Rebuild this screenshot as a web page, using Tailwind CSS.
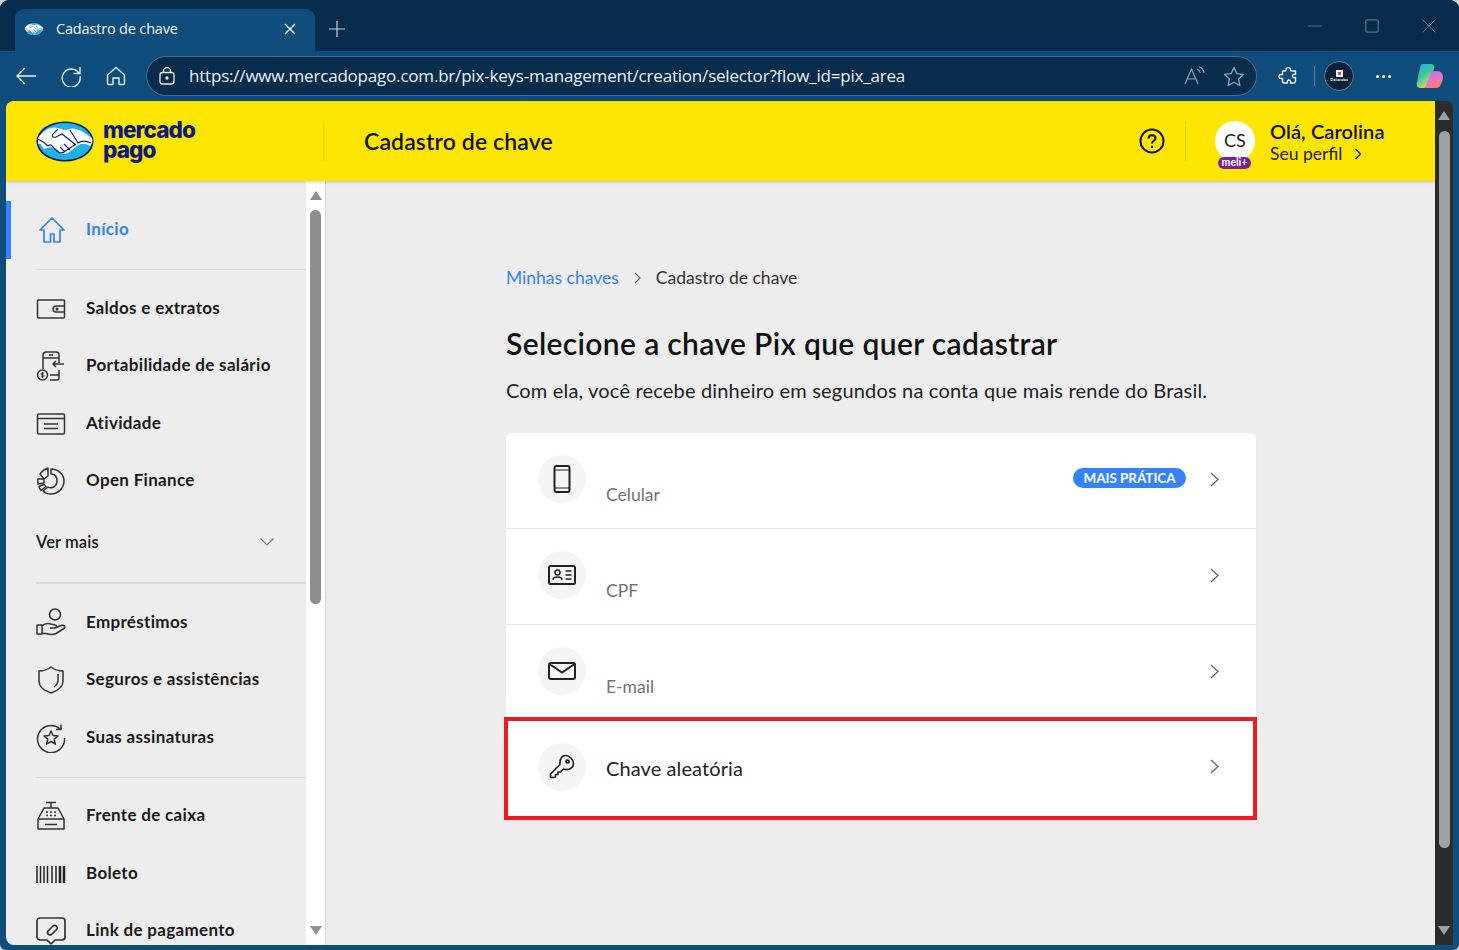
<!DOCTYPE html>
<html lang="pt-BR">
<head>
<meta charset="utf-8">
<title>Cadastro de chave</title>
<script src="https://cdn.jsdelivr.net/npm/@tailwindcss/browser@4"></script>
</head>
<body class="bg-[#cfd3d6] overflow-hidden">
<svg width="0" height="0" class="absolute">
  <defs>
    <symbol id="mp" viewBox="0 0 58 41">
      <ellipse cx="29" cy="20.5" rx="28.5" ry="20" fill="#0b1a80"/>
      <ellipse cx="29" cy="20.5" rx="26.8" ry="18.4" fill="#1fb2e8"/>
      <path d="M2 17C8 9 15 5 22 7c4 1 7 3 11 1 6-2 13 2 23 9 1 3 0 6-2 8-5-3-9-3-13 0l-9 7c-4 2-8 1-11-3-3-4-8-3-13-1-3-3-3-7-6-5z" fill="#fff"/>
      <path d="M22 8l-5 5c-2 2 0 4 3 3l6-3 14 11M12 25c2-2 4-1 5 1l4 4c2 2 5 2 7 1l12-8M24 26l5 5M28 23l6 6M34 9l8 13c3-2 7-3 13 0M2 18c4 2 7 4 10 7" fill="none" stroke="#0b1a80" stroke-width="1.100"/>
    </symbol>
    <linearGradient id="cp1" x1="0" y1="0" x2="0.6" y2="1"><stop offset="0" stop-color="#2aa5ee"/><stop offset=".5" stop-color="#34c9a0"/><stop offset="1" stop-color="#f4d94e"/></linearGradient>
    <linearGradient id="cp2" x1="0.2" y1="0" x2="0.6" y2="1"><stop offset="0" stop-color="#a877ee"/><stop offset=".55" stop-color="#ec72c8"/><stop offset="1" stop-color="#f9854a"/></linearGradient>
  </defs>
</svg>

<div class="w-[1459px] h-[950px] bg-[#0e4c7b] rounded-t-[9px] rounded-b-[6px] overflow-hidden flex flex-col font-['Lato',sans-serif]">
  <!-- tab strip -->
  <div class="h-[51px] shrink-0 bg-[#072b4a] flex items-end pl-[15px]">
    <div class="w-[300px] h-[42px] bg-[#0e4c7b] rounded-t-[9px] flex items-center pl-[9px] pr-[19px] pb-[2px] text-white">
      <svg class="w-[20px] h-[14px] mr-[12px]"><use href="#mp"/></svg>
      <span class="flex-1 text-[14.5px] font-['Open_Sans',sans-serif] tracking-[-0.17px] text-[#f2f6f9]">Cadastro de chave</span>
      <svg class="w-[12px] h-[12px]" viewBox="0 0 12 12" fill="none" stroke="#fff" stroke-width="1.3"><path d="M1 1l10 10M11 1L1 11"/></svg>
    </div>
    <div class="w-[43px] h-[42px] flex items-center justify-center pb-[2px]">
      <svg class="w-[18px] h-[18px]" viewBox="0 0 18 18" fill="none" stroke="#c6d0d8" stroke-width="1.2"><path d="M9 1v16M1 9h16"/></svg>
    </div>
    <div class="flex-1"></div>
    <div class="h-[51px] flex items-center gap-[43px] pr-[23px]">
      <svg class="w-[14px] h-[14px]" viewBox="0 0 14 14" stroke="#5b7287" stroke-width="1"><path d="M0 7h14"/></svg>
      <svg class="w-[14px] h-[14px]" viewBox="0 0 14 14" fill="none" stroke="#5b7287" stroke-width="1.2"><rect x=".8" y=".8" width="12.4" height="12.4" rx="1.5"/></svg>
      <svg class="w-[14px] h-[14px]" viewBox="0 0 14 14" fill="none" stroke="#5b7287" stroke-width="1"><path d="M.5.5l13 13M13.500.5l-13 13"/></svg>
    </div>
  </div>

  <!-- toolbar -->
  <div class="h-[50px] shrink-0 flex items-center pl-[15px] text-white">
    <svg class="w-[22px] h-[20px] mr-[23px]" viewBox="0 0 22 20" fill="none" stroke="#e8eef3" stroke-width="1.4"><path d="M21 10H2M10 2l-8 8 8 8"/></svg>
    <svg class="w-[22px] h-[22px] mr-[24px]" viewBox="0 0 22 22" fill="none" stroke="#e8eef3" stroke-width="1.4"><path d="M19 8.500A9 9 0 1 0 20 11M20 2v6.500h-6.500"/></svg>
    <svg class="w-[20px] h-[20px] mr-[20px]" viewBox="0 0 20 20" fill="none" stroke="#e8eef3" stroke-width="1.4" stroke-linejoin="round"><path d="M10 1.500L1.500 9v8.500a1 1 0 0 0 1 1h4.500v-6.500h6v6.500h4.500a1 1 0 0 0 1-1V9z"/></svg>
    <div class="w-[1111px] h-[40px] bg-[#082c4c] border border-[#46708f] rounded-full flex items-center pl-[12px] pr-[11px]">
      <svg class="w-[16px] h-[18px] mr-[14px]" viewBox="0 0 16 18" fill="none" stroke="#e8eef3" stroke-width="1.3"><rect x="1" y="5.500" width="14" height="11.500" rx="2.500"/><path d="M4.500 5.500V4a3.500 3.500 0 0 1 7 0v1.500"/><circle cx="8" cy="11" r="1" fill="#e8eef3"/></svg>
      <span class="flex-1 text-[17px] tracking-[-0.2px] text-[#eef3f7] font-['Open_Sans',sans-serif] whitespace-nowrap">https://www.mercadopago.com.br/pix-keys-management/creation/selector?flow_id=pix_area</span>
      <svg class="w-[21px] h-[20px] mr-[18px]" viewBox="0 0 21 20" fill="none" stroke="#8ba3b6" stroke-width="1.2"><path d="M1 18L7.500 3 14 18M3.200 13h8.600M13 3c2 1 3 2 3.300 4M15 .8c3 1 4.600 3.200 5 6"/></svg>
      <svg class="w-[22px] h-[21px]" viewBox="0 0 22 21" fill="none" stroke="#8ba3b6" stroke-width="1.3" stroke-linejoin="round"><path d="M11 1.500l2.900 6.100 6.600.8-4.900 4.500 1.300 6.600-5.900-3.300-5.900 3.300 1.300-6.600L1.500 8.400l6.600-.8z"/></svg>
    </div>
    <svg class="w-[20px] h-[20px] ml-[21px]" viewBox="0 0 20 20" fill="none" stroke="#f2f6f9" stroke-width="1.4" stroke-linejoin="round"><path d="M8 3.500C8 1 12.500 1 12.500 3.500c0 1 .5 1.500 1.500 1.500h3.500v3.500c-2.500-.5-3 .5-3 1.500s.5 2 3 1.500v3.500c0 1-.5 2-2 2h-3c.5-2.500-.5-3-1.500-3s-2 .5-1.500 3H6c-1 0-1.500-1-1.500-2v-2.500C2 12.800 1 12 1 10.500s1-2.300 3.500-2V5H7c.7 0 1-.5 1-1.500z"/></svg>
    <div class="w-px h-[20px] bg-[#5f8098] ml-[16px]"></div>
    <div class="w-[30px] h-[30px] ml-[9px] rounded-full bg-[#0b2238] border border-[#5f7a90] flex flex-col items-center justify-center">
      <div class="w-[7px] h-[7px] bg-white flex items-center justify-center"><div class="w-[3px] h-[3px] bg-[#e0591e]"></div></div>
      <span class="text-[4px] leading-[5px] font-bold text-white">Datacaixa</span>
    </div>
    <div class="flex gap-[3px] ml-[22px]">
      <div class="w-[3px] h-[3px] rounded-full bg-white"></div><div class="w-[3px] h-[3px] rounded-full bg-white"></div><div class="w-[3px] h-[3px] rounded-full bg-white"></div>
    </div>
    <svg class="w-[28px] h-[26px] ml-[25px]" viewBox="0 0 28 26">
      <path d="M7 1h8c2 0 3 1 3.500 3L13 20c-1 3-3 5-6 5H4c-3 0-4-3-3-6L4 5c.5-2 1.500-4 3-4z" fill="url(#cp1)"/>
      <path d="M14 8h7c4 0 6 3 6 6 0 2-1 5-2 7-1 3-3 4-5 4h-9c-2 0-2-1-1-3l5-12c0-1 0-2-1-2z" fill="url(#cp2)"/>
    </svg>
  </div>

  <!-- page -->
  <div class="h-[844px] shrink-0 flex pl-[6px]">
    <div class="w-[1429px] h-full rounded-l-[8px] overflow-hidden flex flex-col bg-[#ededed]">
      <!-- header -->
      <header class="h-[80px] shrink-0 bg-[#ffe600] shadow-[0_1px_3px_rgba(0,0,0,0.2)] z-10 flex items-center pl-[30px]">
        <svg class="w-[58px] h-[41px] mr-[9px]"><use href="#mp"/></svg>
        <div class="w-[220px] pb-[3px] text-[#0b1a80] font-['Inter',sans-serif] font-extrabold text-[22.5px] leading-[20px] tracking-[-0.9px]">mercado<br>pago</div>
        <div class="w-px h-[40px] bg-[#e6cf00]"></div>
        <h2 class="ml-[40px] flex-1 text-[23px] font-semibold tracking-[0.12px] text-[#111]">Cadastro de chave</h2>
        <svg class="w-[26px] h-[26px]" viewBox="0 0 26 26" fill="none" stroke="#111" stroke-width="2"><circle cx="13" cy="13" r="11.500"/><path d="M9.500 10.500c0-2 1.500-3.300 3.500-3.300s3.500 1.300 3.500 3c0 2.700-3.500 2.500-3.500 5.300"/><circle cx="13" cy="19" r=".6" fill="#111" stroke-width="1.200"/></svg>
        <div class="w-px h-[40px] bg-[#e6cf00] ml-[20px]"></div>
        <div class="relative w-[40px] h-[40px] ml-[29px] rounded-full bg-white flex items-center justify-center text-[18px] text-[#222] pb-[1px]">CS
          <span class="absolute -bottom-[8px] left-[3px] w-[33px] h-[12px] rounded-full bg-[#7b1fa2] text-white text-[10.5px] leading-[11px] font-bold text-center">meli+</span>
        </div>
        <div class="ml-[15px] w-[165px] pt-[1px]">
          <div class="text-[20px] leading-[24px] font-semibold text-[#111] tracking-[0.1px]">Olá, Carolina</div>
          <div class="flex items-center text-[17.5px] leading-[22px] text-[#222]">Seu perfil
            <svg class="w-[8px] h-[12px] ml-[11px]" viewBox="0 0 8 12" fill="none" stroke="#222" stroke-width="1.300"><path d="M1.500 1l5 5-5 5"/></svg>
          </div>
        </div>
      </header>

      <div class="flex-1 flex min-h-0">
        <!-- sidebar -->
        <aside class="w-[300px] shrink-0 pt-[20px] overflow-hidden text-[17px] font-bold tracking-[0.32px] text-[#1a1a1a]">
          <a class="h-[58px] flex items-center pl-[27px] border-l-[5px] border-[#3483fa] text-[#3483fa]">
            <svg class="w-[28px] h-[28px] mr-[20px]" viewBox="0 0 28 28" fill="none" stroke="#3483fa" stroke-width="1.700" stroke-linejoin="round"><path d="M14 2L2 14h4v12h6.500v-8h3.500v8H22V14h4z"/></svg>
            <span class="pb-[2px]">Início</span>
          </a>
          <div class="h-px bg-[#d9d9d9] ml-[30px] mt-[10px] mb-[10px]"></div>

          <a class="h-[57.5px] flex items-center pl-[30px]">
            <svg class="w-[30px] h-[30px] mr-[20px]" viewBox="0 0 30 30" fill="none" stroke="#333" stroke-width="1.500"><rect x="1.500" y="6" width="27" height="18" rx="1"/><path d="M28 12h-8a3 3 0 0 0 0 6h8"/><circle cx="21" cy="15" r=".8" fill="#333"/></svg>
            <span class="pb-[2px]">Saldos e extratos</span>
          </a>
          <a class="h-[57.5px] flex items-center pl-[30px]">
            <svg class="w-[30px] h-[30px] mr-[20px]" viewBox="0 0 30 30" fill="none" stroke="#333" stroke-width="1.500"><path d="M7 18V4a3 3 0 0 1 3-3h10a3 3 0 0 1 3 3v8M7 7h16M13 4h4M28 13H17M20 10l-3 3 3 3M23 19v8a2 2 0 0 1-2 2h-7M14 24h9"/><circle cx="6.500" cy="24" r="5"/><path d="M8 22H6a1 1 0 0 0 0 2h1a1 1 0 0 1 0 2H5M6.500 21v6" stroke-width="1"/></svg>
            <span class="pb-[3px]">Portabilidade de salário</span>
          </a>
          <a class="h-[57.5px] flex items-center pl-[30px]">
            <svg class="w-[30px] h-[30px] mr-[20px]" viewBox="0 0 30 30" fill="none" stroke="#333" stroke-width="1.500"><rect x="1.500" y="5" width="27" height="20" rx="1.500"/><path d="M1.500 9.500h27M8 15h14M8 19.500h14"/></svg>
            <span class="pb-[2px]">Atividade</span>
          </a>
          <a class="h-[57.5px] flex items-center pl-[30px]">
            <svg class="w-[30px] h-[30px] mr-[20px]" viewBox="0 0 30 30" fill="none" stroke="#333" stroke-width="1.500" stroke-linejoin="round"><path d="M15 3c7 0 13 5 13 12s-6 13-13 13c-3 0-6-1-8-3l5-4c3 2 9 0 9-6s-3-7-6-7z"/><path d="M12 2v8L8 13 4 8c2-3 5-5 8-6zM2 13h6v4l-6 1c-.5-2-.5-3 0-5zM3 20.500l5-2 2 2-5 4c-1-1-1.500-2.500-2-4z"/></svg>
            <span class="pb-[3px]">Open Finance</span>
          </a>

          <div class="h-[40px] mt-[12px] flex items-center pl-[30px] pr-[32px] justify-between text-[16.500px] font-semibold tracking-[0.1px]">
            Ver mais
            <svg class="w-[14px] h-[8px]" viewBox="0 0 14 8" fill="none" stroke="#777" stroke-width="1.100"><path d="M.5.5L7 7l6.500-6.500"/></svg>
          </div>
          <div class="h-[2px] bg-[#d9d9d9] ml-[30px] mt-[20px] mb-[10px]"></div>

          <a class="h-[57.5px] flex items-center pl-[30px]">
            <svg class="w-[30px] h-[30px] mr-[20px]" viewBox="0 0 30 30" fill="none" stroke="#333" stroke-width="1.500" stroke-linejoin="round"><circle cx="19" cy="6.500" r="5.500"/><path d="M1 17h5v9H1zM6 18c3-3 6-3 9-2l4 1c2 .5 2 3 0 3h-5M19 20l6-2.500c3-1 5 1 3 3l-8 5c-4 2-7 1-10 0H6"/></svg>
            <span class="pb-[2px]">Empréstimos</span>
          </a>
          <a class="h-[57.5px] flex items-center pl-[30px]">
            <svg class="w-[30px] h-[30px] mr-[20px]" viewBox="0 0 30 30" fill="none" stroke="#333" stroke-width="1.500" stroke-linejoin="round"><path d="M15 2c4 3 8 4 12 4v10c0 6-6 10-12 12C9 26 3 22 3 16V6c4 0 8-1 12-4z"/><path d="M22 9v6c0 3-1 5-4 7"/></svg>
            <span class="pb-[3px]">Seguros e assistências</span>
          </a>
          <a class="h-[57.5px] flex items-center pl-[30px]">
            <svg class="w-[30px] h-[30px] mr-[20px]" viewBox="0 0 30 30" fill="none" stroke="#333" stroke-width="1.500" stroke-linejoin="round"><path d="M24 6A13.500 13.500 0 1 0 28.500 15"/><path d="M25 1.500V6.500h-5M15 8l2 4.500 5 .5-3.800 3.200 1.200 5-4.400-2.700-4.400 2.700 1.200-5L8 13l5-.5z"/></svg>
            <span class="pb-[2px]">Suas assinaturas</span>
          </a>
          <div class="h-px bg-[#d9d9d9] ml-[30px] mt-[10px] mb-[10px]"></div>
          <a class="h-[57.5px] flex items-center pl-[30px]">
            <svg class="w-[30px] h-[30px] mr-[20px]" viewBox="0 0 30 30" fill="none" stroke="#333" stroke-width="1.500" stroke-linejoin="round"><path d="M10 1.500h10M15 1.500V7M8 7h14l6 11v10H2V18zM2 18h26M9 23.500h12"/><path d="M10 11h2M14 11h2M18 11h2M10 14.500h2M14 14.500h2M18 14.500h2"/></svg>
            <span class="pb-[3px]">Frente de caixa</span>
          </a>
          <a class="h-[57.5px] flex items-center pl-[30px]">
            <svg class="w-[30px] h-[30px] mr-[20px]" viewBox="0 0 30 30" stroke="#222" fill="none"><path stroke-width="1.500" d="M1 7v17M4.500 7v17M8 7v17M11.500 7v17M16 7v17M20 7v17"/><path stroke-width="2.500" d="M24 7v17M28 7v17"/></svg>
            <span class="pb-[2px]">Boleto</span>
          </a>
          <a class="h-[57.5px] flex items-center pl-[30px]">
            <svg class="w-[30px] h-[30px] mr-[20px]" viewBox="0 0 30 30" fill="none" stroke="#333" stroke-width="1.700" stroke-linejoin="round"><path d="M4 2h22a3 3 0 0 1 3 3v16a3 3 0 0 1-3 3h-7l-4 4-4-4H4a3 3 0 0 1-3-3V5a3 3 0 0 1 3-3z"/><path d="M13 14l4-4a2.500 2.500 0 0 1 3.500 3.500l-5 5a2.500 2.500 0 0 1-3.500-3.500l3-3"/></svg>
            <span class="pb-[3px]">Link de pagamento</span>
          </a>
        </aside>
        <!-- sidebar scrollbar -->
        <div class="w-[20px] shrink-0 bg-white border-r border-[#d8d8d8] flex flex-col items-center pt-[10px] pb-[10px]">
          <div class="w-0 h-0 border-x-[6px] border-x-transparent border-b-[9px] border-b-[#8e8e8e]"></div>
          <div class="w-[11px] h-[394px] rounded-full bg-[#8e8e8e] mt-[10px]"></div>
          <div class="flex-1"></div>
          <div class="w-0 h-0 border-x-[6px] border-x-transparent border-t-[9px] border-t-[#8e8e8e]"></div>
        </div>

        <!-- main -->
        <main class="flex-1 pl-[180px] pt-[86px] text-[#1a1a1a]">
          <nav class="flex items-center text-[17.5px] leading-[22px]">
            <span class="text-[#3483fa]">Minhas chaves</span>
            <svg class="w-[7px] h-[12px] mx-[15px]" viewBox="0 0 7 12" fill="none" stroke="#666" stroke-width="1.200"><path d="M1 1l5 5-5 5"/></svg>
            <span class="text-[#333]">Cadastro de chave</span>
          </nav>
          <h1 class="mt-[35px] text-[30px] leading-[38px] font-semibold tracking-[0.35px] text-[#111]">Selecione a chave Pix que quer cadastrar</h1>
          <p class="mt-[15px] text-[20px] leading-[26px] tracking-[0.18px] text-[#222]">Com ela, você recebe dinheiro em segundos na conta que mais rende do Brasil.</p>

          <section class="w-[750px] mt-[30px] bg-white rounded-[6px] shadow-[0_1px_2px_rgba(0,0,0,0.06)]">
            <div class="h-[96px] border-b border-[#e5e5e5] flex items-start pl-[32px] pr-[37px] pt-[22px]">
              <div class="w-[48px] h-[48px] rounded-full bg-[#f5f5f5] flex items-center justify-center">
                <svg class="w-[18px] h-[28px]" viewBox="0 0 18 28" fill="none" stroke="#222" stroke-width="2"><rect x="1.500" y="1" width="15" height="26" rx="2"/><path d="M1.500 5h15M1.500 23h15" stroke-width="1"/></svg>
              </div>
              <span class="ml-[20px] mt-[28px] text-[17.5px] leading-[24px] text-[#737373] flex-1">Celular</span>
              <span class="mt-[13px] h-[20px] w-[113px] rounded-full bg-[#3483fa] text-white text-[13.500px] leading-[20px] font-bold text-center tracking-[-0.05px]">MAIS PRÁTICA</span>
              <svg class="w-[9px] h-[15px] ml-[24px] mt-[17px]" viewBox="0 0 9 15" fill="none" stroke="#666" stroke-width="1.300"><path d="M1 1l7 6.500L1 14"/></svg>
            </div>
            <div class="h-[96px] border-b border-[#e5e5e5] flex items-start pl-[32px] pr-[37px] pt-[22px]">
              <div class="w-[48px] h-[48px] rounded-full bg-[#f5f5f5] flex items-center justify-center">
                <svg class="w-[28px] h-[20px]" viewBox="0 0 28 20" fill="none" stroke="#222" stroke-width="2"><rect x="1" y="1" width="26" height="18" rx="1.500"/><circle cx="9.500" cy="7.500" r="2.500" stroke-width="1.500"/><path d="M5 15c0-4 9-4 9 0M17.500 6h6M17.500 10h6M17.500 14h6" stroke-width="1.500"/></svg>
              </div>
              <span class="ml-[20px] mt-[28px] text-[17.5px] leading-[24px] text-[#737373] flex-1">CPF</span>
              <svg class="w-[9px] h-[15px] mt-[17px]" viewBox="0 0 9 15" fill="none" stroke="#666" stroke-width="1.300"><path d="M1 1l7 6.500L1 14"/></svg>
            </div>
            <div class="h-[92px] flex items-start pl-[32px] pr-[37px] pt-[22px]">
              <div class="w-[48px] h-[48px] rounded-full bg-[#f5f5f5] flex items-center justify-center">
                <svg class="w-[28px] h-[18px]" viewBox="0 0 28 18" fill="none" stroke="#222" stroke-width="2"><rect x="1" y="1" width="26" height="16" rx="2"/><path d="M1.500 2l12.500 8.500L26.500 2"/></svg>
              </div>
              <span class="ml-[20px] mt-[28px] text-[17.5px] leading-[24px] text-[#737373] flex-1">E-mail</span>
              <svg class="w-[9px] h-[15px] mt-[17px]" viewBox="0 0 9 15" fill="none" stroke="#666" stroke-width="1.300"><path d="M1 1l7 6.500L1 14"/></svg>
            </div>
            <div class="h-[103px] -ml-[2px] -mr-[1px] border-[4px] border-[#ed1c24] flex items-center pl-[30px] pr-[34px]">
              <div class="w-[48px] h-[48px] -mt-[3px] rounded-full bg-[#f5f5f5] flex items-center justify-center">
                <svg class="w-[26px] h-[26px]" viewBox="0 0 26 26" fill="none" stroke="#222" stroke-width="1.700" stroke-linejoin="round"><path d="M16.500 1.500c4 0 8 4 8 8 0 4-3.500 6.500-8 6l-2-.5-3 3h-2.500v2.500h-2.500v2.500l-2.500.5H1.500V20L11 10.500c-.5-5 1.500-9 5.500-9z"/><circle cx="18.500" cy="7.500" r="1.500"/></svg>
              </div>
              <span class="ml-[20px] flex-1 text-[20px] tracking-[0.1px] text-[#222] pb-[2px]">Chave aleatória</span>
              <svg class="w-[9px] h-[15px] -mt-[4px]" viewBox="0 0 9 15" fill="none" stroke="#666" stroke-width="1.300"><path d="M1 1l7 6.500L1 14"/></svg>
            </div>
          </section>
        </main>
      </div>
    </div>
    <!-- page scrollbar -->
    <div class="w-[18px] h-full bg-[#2b2b2b] rounded-tr-[6px] flex flex-col items-center pt-[10px] pb-[10px]">
      <div class="w-0 h-0 border-x-[6px] border-x-transparent border-b-[9px] border-b-[#a0a0a0]"></div>
      <div class="w-[11px] h-[717px] rounded-full bg-[#a0a0a0] mt-[11px]"></div>
      <div class="flex-1"></div>
      <div class="w-0 h-0 border-x-[6px] border-x-transparent border-t-[9px] border-t-[#a0a0a0]"></div>
    </div>
  </div>
</div>
</body>
</html>
